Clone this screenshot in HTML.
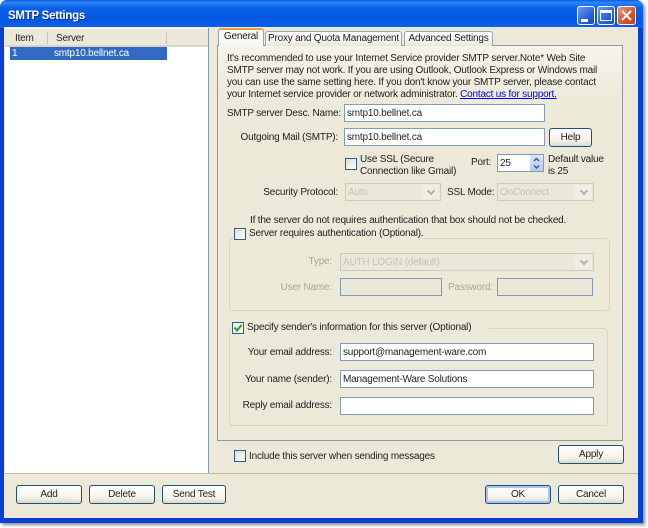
<!DOCTYPE html>
<html><head><meta charset="utf-8"><style>
html,body{margin:0;padding:0;background:#fff}
body{width:648px;height:528px;position:relative;overflow:hidden;font-family:"Liberation Sans",sans-serif;font-size:10px;letter-spacing:-.2px;color:#222}
div,span.a{position:absolute;box-sizing:border-box}
#w{left:0;top:0;width:648px;height:528px;filter:blur(.3px)}
.t{white-space:nowrap;line-height:13px;height:13px}
.r{text-align:right}
.in{background:#fff;border:1px solid #7f9db9;padding:2px 2px;line-height:13px;white-space:nowrap}
.btn{border:1px solid #1c5180;border-radius:3px;background:linear-gradient(#fff,#f3f2ea 70%,#dcd8c8);text-align:center;line-height:17px;color:#222}
.cb{width:12px;height:12px;border:1px solid #2f5f8f;background:linear-gradient(135deg,#dcdcd7,#fff)}
.dis{color:#aca899}
.sel{background:#ebe8d9;border:1px solid #cdcabb;color:#c5c2b2;padding:2px 2px;line-height:13px;white-space:nowrap}
.arr{position:absolute;right:1px;top:1px;bottom:1px;width:17px;background:#efeee5}
.arr:after{content:"";position:absolute;left:6px;top:3px;width:4px;height:4px;border:solid #b5b2a2;border-width:0 2px 2px 0;transform:rotate(45deg)}
.gb{border:1px solid #d8d6c6;border-radius:4px}
.tab{background:linear-gradient(#fff,#f3f2ea 70%,#e8e6d8);border:1px solid #91a7b4;border-bottom:none;border-radius:3px 3px 0 0;text-align:center;line-height:14px;white-space:nowrap}
</style></head><body><div id="w">
<div style="left:0;top:0;width:643px;height:523px;background:#0a3fd6;border-radius:7px 7px 0 0;box-shadow:2px 2px 3px #888"></div>
<div style="left:0;top:0;width:643px;height:28px;border-radius:7px 7px 0 0;background:linear-gradient(#0a5ae0 0,#2a86f5 8%,#0a60e8 30%,#0558e0 70%,#0a62f0 100%)"></div>
<div class="t" style="left:8px;top:9px;font-size:11.500px;letter-spacing:-.25px;font-weight:bold;color:#fff;text-shadow:1px 1px 0 #0a2f9a;height:15px;line-height:15px">SMTP Settings</div>

<!-- window buttons -->
<div style="left:577px;top:6px;width:18px;height:19px;border:1px solid #fff;border-radius:3px;background:linear-gradient(135deg,#6f9cf2,#2a5fdc 60%,#1a48c0)"></div>
<div style="left:581px;top:19px;width:7px;height:3px;background:#fff"></div>
<div style="left:597px;top:6px;width:18px;height:19px;border:1px solid #fff;border-radius:3px;background:linear-gradient(135deg,#6f9cf2,#2a5fdc 60%,#1a48c0)"></div>
<div style="left:600px;top:10px;width:12px;height:11px;border:1px solid #fff;border-top-width:3px"></div>
<div style="left:617px;top:6px;width:19px;height:19px;border:1px solid #fff;border-radius:3px;background:linear-gradient(135deg,#ec9a7e,#d9572f 55%,#c03f1a)"></div>
<svg style="position:absolute;left:617px;top:6px" width="19" height="19"><path d="M5 5L14 14M14 5L5 14" stroke="#fff" stroke-width="2" fill="none"/></svg>

<!-- client -->
<div style="left:4px;top:27px;width:634px;height:491px;background:#ece9d8"></div>

<!-- list -->
<div style="left:5px;top:28px;width:204px;height:446px;background:#fff;border:1px solid #7f9db9;border-top:none;border-left:none"></div>
<div style="left:5px;top:29px;width:203px;height:18px;background:#ebe8d9;border-bottom:2px solid #d8d5c5"></div>
<div style="left:47px;top:32px;width:1px;height:12px;background:#c8c5b3"></div>
<div style="left:166px;top:32px;width:1px;height:12px;background:#c8c5b3"></div>
<div class="t" style="left:15px;top:32px">Item</div>
<div class="t" style="left:56px;top:32px">Server</div>
<div style="left:10px;top:47px;width:157px;height:13px;background:#316ac5"></div>
<div class="t" style="left:12px;top:47px;color:#fff">1</div>
<div class="t" style="left:54px;top:47px;color:#fff">smtp10.bellnet.ca</div>

<!-- tabs -->
<div style="left:217px;top:45px;width:406px;height:396px;border:1px solid #919b9c;background:linear-gradient(#f5f3ea,#ece9d8 60px)"></div>
<div class="tab" style="left:265px;top:31px;width:137px;height:15px">Proxy and Quota Management</div>
<div class="tab" style="left:404px;top:31px;width:89px;height:15px">Advanced Settings</div>
<div style="left:218px;top:28px;width:46px;height:18px;background:#f9f8f2;border:1px solid #91a7b4;border-top:2px solid #f0a030;border-bottom:none;border-radius:3px 3px 0 0;text-align:center;line-height:14px">General</div>

<!-- intro -->
<div class="t" style="left:227px;top:52px">It's recommended to use your Internet Service provider SMTP server.Note* Web Site</div>
<div class="t" style="left:227px;top:64px">SMTP server may not work. If you are using Outlook, Outlook Express or Windows mail</div>
<div class="t" style="left:227px;top:76px">you can use the same setting here. If you don't know your SMTP server, please contact</div>
<div class="t" style="left:227px;top:88px">your Internet service provider or network administrator. <span style="color:#00e;text-decoration:underline">Contact us for support.</span></div>

<div class="t r" style="left:220px;width:121px;top:107px">SMTP server Desc. Name:</div>
<div class="in" style="left:344px;top:104px;width:201px;height:18px">smtp10.bellnet.ca</div>
<div class="t r" style="left:220px;width:118px;top:131px">Outgoing Mail (SMTP):</div>
<div class="in" style="left:344px;top:128px;width:201px;height:18px">smtp10.bellnet.ca</div>
<div class="btn" style="left:549px;top:128px;width:43px;height:19px">Help</div>

<div class="cb" style="left:345px;top:158px"></div>
<div class="t" style="left:360px;top:153px">Use SSL (Secure</div>
<div class="t" style="left:360px;top:165px">Connection like Gmail)</div>
<div class="t" style="left:471px;top:156px">Port:</div>
<div class="in" style="left:497px;top:154px;width:47px;height:18px;padding-left:2px">25</div>
<div style="left:530px;top:155px;width:13px;height:16px;background:linear-gradient(#dbe6fa,#b5c9ee)"></div>
<svg style="position:absolute;left:530px;top:155px" width="13" height="16"><path d="M4 6L6.500 3.500L9 6M4 10.500L6.500 13L9 10.500" stroke="#3a5a90" stroke-width="1.500" fill="none"/></svg>
<div class="t" style="left:548px;top:153px">Default value</div>
<div class="t" style="left:548px;top:165px">is 25</div>

<div class="t r" style="left:220px;width:118px;top:186px">Security Protocol:</div>
<div class="sel" style="left:345px;top:183px;width:96px;height:18px">Auto<span class="arr"></span></div>
<div class="t" style="left:447px;top:186px">SSL Mode:</div>
<div class="sel" style="left:497px;top:183px;width:97px;height:18px">OnConnect<span class="arr"></span></div>

<div class="t" style="left:250px;top:214px">If the server do not requires authentication that box should not be checked.</div>
<div class="gb" style="left:229px;top:238px;width:381px;height:73px"></div>
<div style="left:233px;top:226px;width:190px;height:14px;background:#ece9d8"></div>
<div class="cb" style="left:234px;top:228px"></div>
<div class="t" style="left:249px;top:227px">Server requires authentication (Optional).</div>

<div class="t r dis" style="left:260px;width:72px;top:255px">Type:</div>
<div class="sel" style="left:340px;top:253px;width:254px;height:18px">AUTH LOGIN (default)<span class="arr"></span></div>
<div class="t r dis" style="left:260px;width:72px;top:281px">User Name:</div>
<div class="in" style="left:340px;top:278px;width:102px;height:18px;background:#ebe8d9"></div>
<div class="t dis" style="left:448px;top:281px">Password:</div>
<div class="in" style="left:497px;top:278px;width:96px;height:18px;background:#ebe8d9"></div>

<div class="gb" style="left:229px;top:328px;width:379px;height:98px"></div>
<div style="left:231px;top:319px;width:258px;height:14px;background:#ece9d8"></div>
<div class="cb" style="left:232px;top:322px;background:#f4f4ec"></div>
<svg style="position:absolute;left:232px;top:322px" width="12" height="12"><path d="M2.500 5.500L5 8.500L9.500 3" stroke="#21a121" stroke-width="2" fill="none"/></svg>
<div class="t" style="left:247px;top:321px">Specify sender's information for this server (Optional)</div>

<div class="t r" style="left:220px;width:112px;top:346px">Your email address:</div>
<div class="in" style="left:340px;top:343px;width:254px;height:18px">support@management-ware.com</div>
<div class="t r" style="left:220px;width:112px;top:373px">Your name (sender):</div>
<div class="in" style="left:340px;top:370px;width:254px;height:18px">Management-Ware Solutions</div>
<div class="t r" style="left:220px;width:112px;top:399px">Reply email address:</div>
<div class="in" style="left:340px;top:397px;width:254px;height:18px"></div>

<div class="cb" style="left:234px;top:450px"></div>
<div class="t" style="left:249px;top:450px">Include this server when sending messages</div>
<div class="btn" style="left:558px;top:445px;width:66px;height:19px">Apply</div>

<div style="left:5px;top:473px;width:633px;height:1px;background:#bdbaaa"></div>
<div class="btn" style="left:16px;top:485px;width:66px;height:19px">Add</div>
<div class="btn" style="left:89px;top:485px;width:66px;height:19px">Delete</div>
<div class="btn" style="left:162px;top:485px;width:64px;height:19px">Send Test</div>
<div class="btn" style="left:485px;top:485px;width:66px;height:19px;box-shadow:inset 0 0 0 2px #a9c4ee">OK</div>
<div class="btn" style="left:558px;top:485px;width:66px;height:19px">Cancel</div>
</div></body></html>
